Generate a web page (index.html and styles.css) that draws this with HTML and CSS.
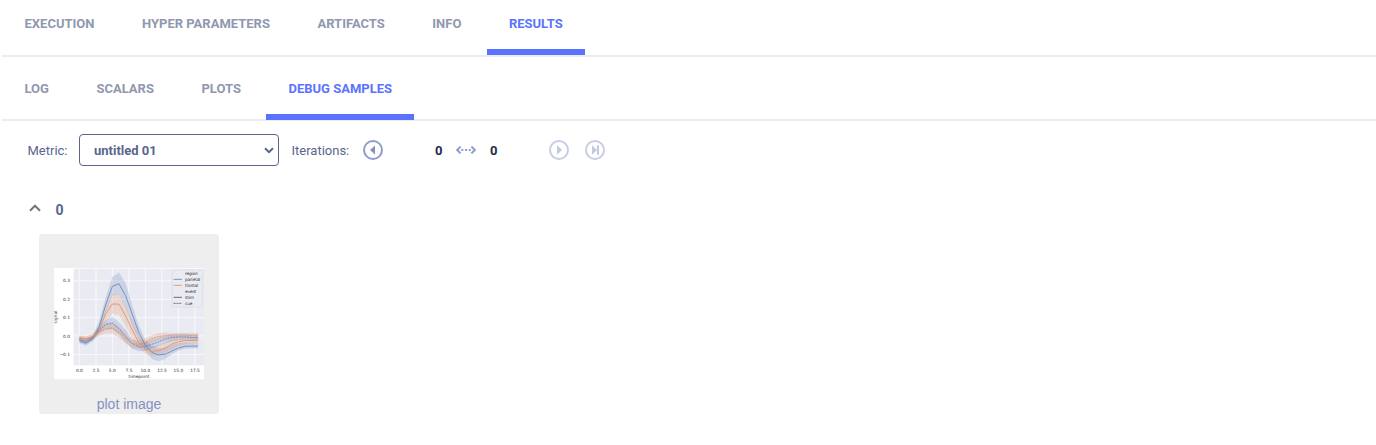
FILE: index.html
```html
<!DOCTYPE html>
<html lang="en">
<head>
<meta charset="utf-8">
<title>Debug samples</title>
<link rel="stylesheet" href="styles.css">
</head>
<body>
<nav class="tabs">
  <a class="tab">EXECUTION</a>
  <a class="tab">HYPER PARAMETERS</a>
  <a class="tab">ARTIFACTS</a>
  <a class="tab">INFO</a>
  <a class="tab active">RESULTS</a>
</nav>
<nav class="tabs sub">
  <a class="tab">LOG</a>
  <a class="tab">SCALARS</a>
  <a class="tab">PLOTS</a>
  <a class="tab active">DEBUG SAMPLES</a>
</nav>
<div class="toolbar">
  <span class="label">Metric:</span>
  <div class="select">
    <span>untitled 01</span>
    <svg width="10" height="7" viewBox="0 0 10 7"><path d="M1 1.2 5 5.2 9 1.2" fill="none" stroke="#5a658e" stroke-width="2"/></svg>
  </div>
  <span class="label iterations">Iterations:</span>
  <svg class="icon prev" width="20" height="20" viewBox="0 0 20 20"><circle cx="10" cy="10" r="9"/><path d="M12 5.500v9L7 10z"/></svg>
  <span class="count from">0</span>
  <svg class="range" width="20" height="8" viewBox="0 0 20 8"><path d="M4.600.6 1.200 4l3.400 3.400M15.400.6 18.800 4l-3.400 3.400" fill="none" stroke="#8f9dcb" stroke-width="2"/><path d="M5.300 3h2v2h-2zM9 3h2v2H9zM12.700 3h2v2h-2z" fill="#8f9dcb"/></svg>
  <span class="count to">0</span>
  <svg class="icon next off" width="20" height="20" viewBox="0 0 20 20"><circle cx="10" cy="10" r="9"/><path d="M8 5.300v9.400l5-4.700z"/></svg>
  <svg class="icon last off" width="20" height="20" viewBox="0 0 20 20"><circle cx="10" cy="10" r="9"/><path d="M7 5.300v9.400l5-4.700zM12 5.300h2v9.400h-2z"/></svg>
</div>
<div class="group">
  <svg width="12" height="8" viewBox="0 0 12 8"><path d="M1 6.700 6 1.700l5 5" fill="none" stroke="#757575" stroke-width="2"/></svg>
  <span>0</span>
</div>
<figure class="card">
  <svg class="plot" viewBox="72 130 450 334" preserveAspectRatio="none">
    <path fill="#fff" d="M72 130h450v334H72z"/>
    <path fill="#eaeaf2" d="M131 132h391v290H131z"/>
    <path class="grid" d="M148 132v290M198 132v290M247 132v290M296.500 132v290M346 132v290M395.500 132v290M445 132v290M494.500 132v290M131 168.500h391M131 224h391M131 279h391M131 334h391M131 389.500h391"/>
    <g transform="translate(148 334) scale(19.8 -552)">
      <polygon class="band blue" points="0,-.01 1,-.02 2,0 3,.08 4,.21 5,.32 6,.345 7,.29 8,.17 9,.06 10,-.02 11,-.055 12,-.067 13,-.065 14,-.05 15,-.04 16,-.035 17,-.035 18,-.035 18,-.068 17,-.068 16,-.07 15,-.08 14,-.1 13,-.125 12,-.138 11,-.125 10,-.08 9,-.02 8,.06 7,.155 6,.225 5,.22 4,.13 3,.02 2,-.03 1,-.053 0,-.04"/>
      <polygon class="band orange" points="0,.002 1,-.003 2,.01 3,.06 4,.15 5,.225 6,.227 7,.165 8,.085 9,.005 10,-.04 11,-.055 12,-.05 13,-.035 14,-.015 15,-.01 16,-.005 17,-.005 18,-.002 18,-.04 17,-.04 16,-.045 15,-.055 14,-.07 13,-.09 12,-.105 11,-.11 10,-.1 9,-.065 8,-.01 7,.055 6,.115 5,.12 4,.075 3,.01 2,-.02 1,-.027 0,-.022"/>
      <polygon class="band blue" points="0,-.01 1,-.02 2,0 3,.05 4,.085 5,.105 6,.075 7,.035 8,-.015 9,-.035 10,-.035 11,-.022 12,-.01 13,.003 14,.012 15,.015 16,.015 17,.01 18,.01 18,-.03 17,-.028 16,-.025 15,-.025 14,-.03 13,-.04 12,-.055 11,-.07 10,-.08 9,-.083 8,-.07 7,-.035 6,.01 5,.035 4,.035 3,.015 2,-.025 1,-.045 0,-.035"/>
      <polygon class="band orange" points="0,.003 1,-.003 2,.008 3,.035 4,.065 5,.075 6,.05 7,.015 8,-.02 9,-.025 10,-.015 11,.005 12,.015 13,.02 14,.012 15,.012 16,.013 17,.018 18,.018 18,-.015 17,-.012 16,-.01 15,-.012 14,-.012 13,-.015 12,-.022 11,-.035 10,-.055 9,-.07 8,-.065 7,-.04 6,-.01 5,.013 4,.013 3,0 2,-.02 1,-.03 0,-.023"/>
      <polyline class="line blue" points="0,-.025 1,-.038 2,-.015 3,.05 4,.17 5,.27 6,.284 7,.22 8,.12 9,.02 10,-.05 11,-.09 12,-.103 13,-.099 14,-.082 15,-.066 16,-.056 17,-.055 18,-.055"/>
      <polyline class="line orange" points="0,-.01 1,-.017 2,-.005 3,.035 4,.12 5,.174 6,.173 7,.11 8,.035 9,-.035 10,-.07 11,-.083 12,-.08 13,-.065 14,-.045 15,-.032 16,-.025 17,-.024 18,-.023"/>
      <polyline class="line blue dash" points="0,-.02 1,-.03 2,-.01 3,.03 4,.063 5,.07 6,.04 7,-.002 8,-.042 9,-.06 10,-.058 11,-.045 12,-.032 13,-.018 14,-.008 15,-.005 16,-.005 17,-.008 18,-.01"/>
      <polyline class="line orange dash" points="0,-.01 1,-.015 2,-.003 3,.02 4,.038 5,.044 6,.02 7,-.012 8,-.04 9,-.047 10,-.034 11,-.014 12,-.003 13,.002 14,0 15,0 16,.001 17,.002 18,.001"/>
    </g>
    <rect x="427" y="136" width="91" height="111" rx="2" fill="#eaeaf2" fill-opacity=".85" stroke="#d9d9e2" stroke-width="2"/>
    <path class="line blue" d="M431 164h25"/>
    <path class="line orange" d="M431 182h25"/>
    <path class="line dark" d="M431 218h25"/>
    <path class="line dark dash" d="M431 236h25"/>
    <g class="tick legend">
      <text x="465" y="151" textLength="38">region</text><text x="465" y="169" textLength="46">parietal</text><text x="465" y="187" textLength="40">frontal</text>
      <text x="465" y="205" textLength="34">event</text><text x="465" y="223" textLength="27">stim</text><text x="465" y="241" textLength="22">cue</text>
    </g>
    <g class="tick end">
      <text x="120" y="173">0.3</text><text x="120" y="229">0.2</text><text x="120" y="284">0.1</text>
      <text x="120" y="339">0.0</text><text x="120" y="394">−0.1</text>
    </g>
    <g class="tick mid">
      <text x="148" y="443">0.0</text><text x="198" y="443">2.5</text><text x="247" y="443">5.0</text><text x="297" y="443">7.5</text>
      <text x="346" y="443">10.0</text><text x="396" y="443">12.5</text><text x="445" y="443">15.0</text><text x="495" y="443">17.5</text>
      <text x="327" y="460">timepoint</text>
      <text transform="translate(82 277) rotate(-90)">signal</text>
    </g>
  </svg>
  <figcaption>plot image</figcaption>
</figure>
</body>
</html>
```
FILE: styles.css
```css
body {
  margin: 0;
  padding-left: 2px;
  background: #fff;
  font-family: Roboto, sans-serif;
  font-size: 13px;
  color: #5a658e;
  overflow: hidden;
}

.tabs {
  display: flex;
  gap: 3.5px;
  box-sizing: border-box;
  height: 57px;
  padding-left: 0.5px;
  border-bottom: 2px solid #ececec;
}

.tabs.sub {
  height: 64px;
}

.tab {
  box-sizing: border-box;
  height: 55px;
  padding: 0 22px;
  line-height: 47px;
  font-weight: 700;
  color: #8f98ae;
}

.tab.active {
  color: #5a73ff;
  border-bottom: 6px solid #5a73ff;
}

.sub .tab {
  height: 63px;
  line-height: 63px;
}

.toolbar {
  display: flex;
  align-items: center;
  height: 32px;
  margin-top: 13px;
  padding-left: 25.5px;
}

.label {
  width: 51.5px;
}

.select {
  display: flex;
  align-items: center;
  justify-content: space-between;
  box-sizing: border-box;
  width: 200px;
  height: 32px;
  padding: 0 4px 0 14px;
  border: 1px solid #5a658e;
  border-radius: 4px;
  font-weight: 700;
}

.iterations {
  width: 71.5px;
  margin-left: 12.5px;
}

.icon {
  fill: #8492c2;
}

.icon circle {
  fill: none;
  stroke: #8f9dcb;
  stroke-width: 2;
}

.off {
  opacity: .5;
}

.count {
  width: 21px;
  font-weight: 700;
  color: #252b48;
}

.from {
  margin-left: 52px;
}

.to {
  margin-left: 14px;
}

.next {
  margin-left: 38px;
}

.last {
  margin-left: 16px;
}

.group {
  display: flex;
  align-items: center;
  gap: 14.5px;
  height: 20px;
  margin-top: 34px;
  padding-left: 27px;
  font-size: 14px;
  font-weight: 700;
}

.group svg {
  margin-bottom: 4px;
}

.card {
  display: flex;
  flex-direction: column;
  align-items: center;
  box-sizing: border-box;
  width: 180px;
  height: 180px;
  margin: 14px 0 0 37px;
  padding-top: 34.4px;
  background: #eee;
  border-radius: 4px;
}

.card figcaption {
  margin-top: 15.3px;
  font: 14px/18px "Liberation Sans", Arial, sans-serif;
  color: #8492c2;
}

.plot {
  width: 150px;
  height: 111.3px;
}

.grid {
  stroke: #fff;
  stroke-width: 2;
  fill: none;
}

.band {
  fill-opacity: .2;
}

.band.blue {
  fill: #4c72b0;
}

.band.orange {
  fill: #dd8452;
}

.line {
  fill: none;
  stroke-width: .85px;
  vector-effect: non-scaling-stroke;
}

.line.blue {
  stroke: #6485c0;
}

.line.orange {
  stroke: #df9068;
}

.line.dark {
  stroke: #555;
}

.dash {
  stroke-dasharray: 2 .8;
}

.tick {
  font-family: "DejaVu Sans", sans-serif;
  font-size: 13px;
  fill: #333;
}

.end {
  text-anchor: end;
}

.mid {
  text-anchor: middle;
}
```
